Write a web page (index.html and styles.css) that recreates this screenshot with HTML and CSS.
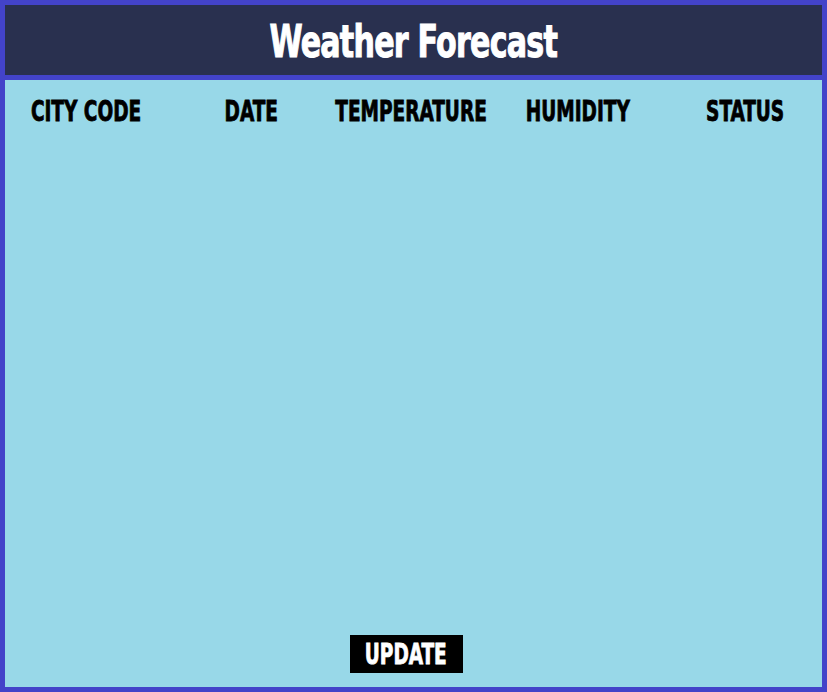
FILE: index.html
```html
<!DOCTYPE html>
<html>
<head>
<meta charset="utf-8">
<link rel="stylesheet" href="styles.css">
</head>
<body>
<div class="app">
  <header class="title-bar"><h1 class="title">Weather Forecast</h1></header>
  <main class="panel">
    <div class="cols">
      <div class="col"><span class="label">CITY CODE</span></div>
      <div class="col"><span class="label">DATE</span></div>
      <div class="col"><span class="label">TEMPERATURE</span></div>
      <div class="col"><span class="label">HUMIDITY</span></div>
      <div class="col"><span class="label">STATUS</span></div>
    </div>
    <div class="spacer"></div>
    <div class="cols footer">
      <div class="col-btn"><button class="update"><span class="label">UPDATE</span></button></div>
    </div>
  </main>
</div>
</body>
</html>
```
FILE: styles.css
```css
html, body { margin: 0; padding: 0; }
body { width: 827px; height: 692px; overflow: hidden; }
.app {
  box-sizing: border-box;
  width: 827px; height: 692px;
  border: 5px solid #4343c9;
  display: flex; flex-direction: column;
  font-family: "DejaVu Sans Condensed", "DejaVu Sans", sans-serif;
  font-weight: bold;
}
.title-bar {
  height: 70px;
  background: #29304f;
  border-bottom: 5px solid #4343c9;
  display: flex; align-items: center; justify-content: center;
}
.title {
  margin: 0; color: #fff;
  font-size: 44px; letter-spacing: -1px;
  white-space: nowrap;
  transform: scaleX(0.76);
  -webkit-text-stroke: 1px #fff;
  position: relative; top: 1px;
}
.panel {
  flex: 1;
  background: #98d8e8;
  display: flex; flex-direction: column;
}
.cols {
  display: grid;
  grid-template-columns: 162px 168px 152px 182px 153px;
}
.col {
  display: flex; justify-content: center;
  padding-top: 15px;
  color: #000;
}
.label {
  display: inline-block;
  white-space: nowrap;
  font-size: 28px;
  transform: scaleX(0.735);
  -webkit-text-stroke: 0.8px currentColor;
}
.spacer { flex: 1; }
.footer { padding-bottom: 14px; }
.col-btn { grid-column: 3; display: flex; justify-content: center; padding-right: 10px; }
.update {
  width: 113px; height: 38px;
  background: #000; color: #fff; border: 0;
  font-family: inherit; font-weight: bold;
  padding: 0;
  display: inline-flex; align-items: center; justify-content: center;
  overflow: visible;
}
.update .label { font-size: 28px; }
```
